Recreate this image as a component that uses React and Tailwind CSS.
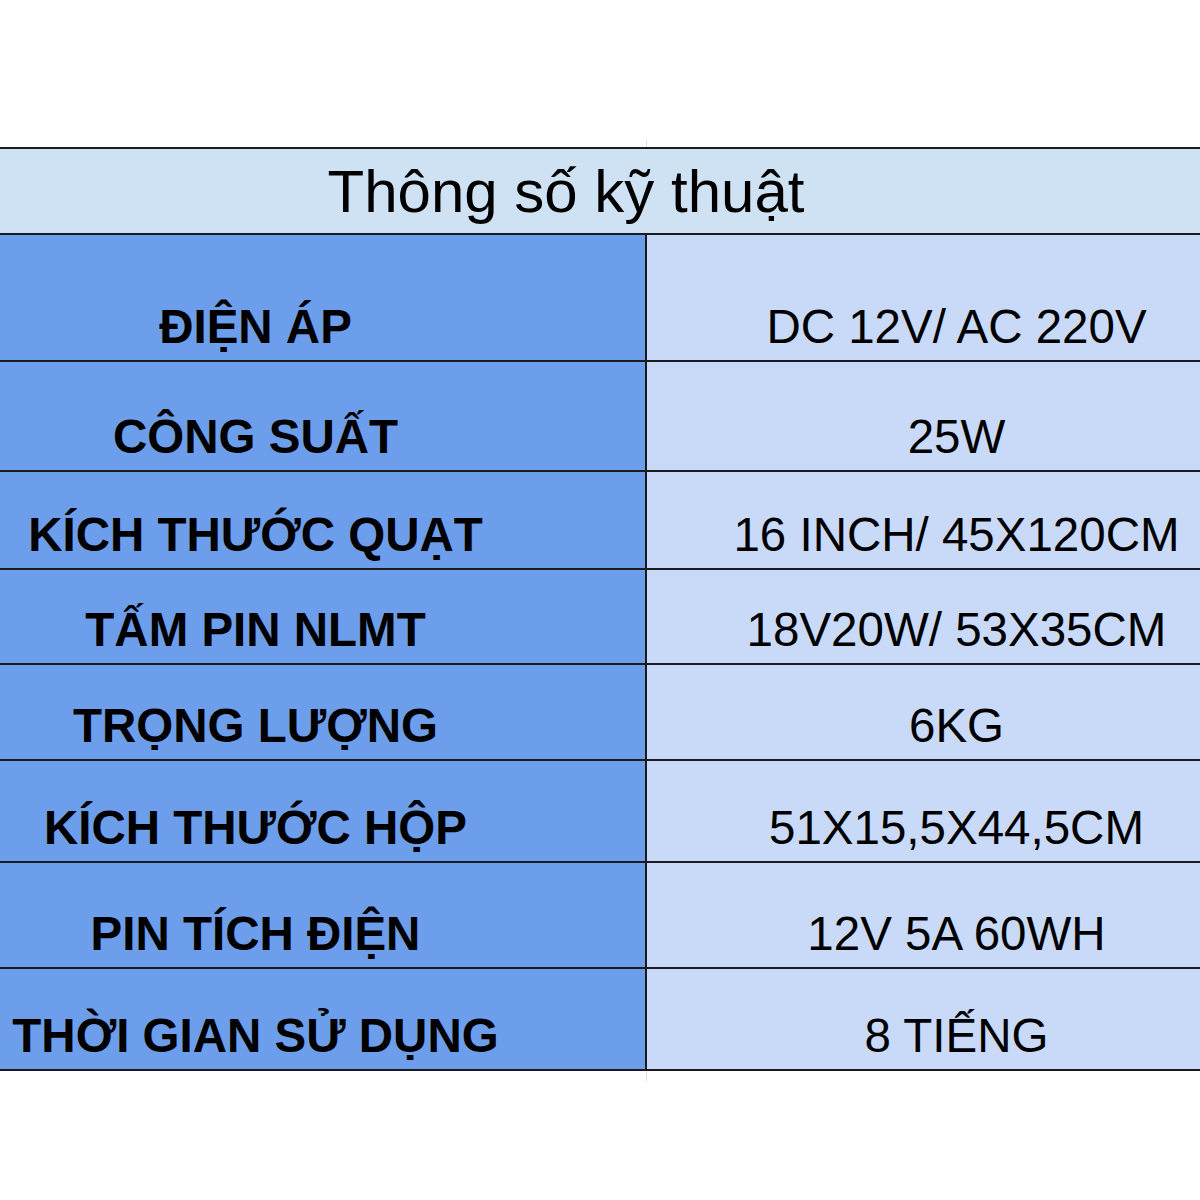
export default function App() {
  const rows = [
    ["ĐIỆN ÁP", "DC 12V/ AC 220V", "h-[127px]"],
    ["CÔNG SUẤT", "25W", "h-[110px]"],
    ["KÍCH THƯỚC QUẠT", "16 INCH/ 45X120CM", "h-[98px]"],
    ["TẤM PIN NLMT", "18V20W/ 53X35CM", "h-[95px]"],
    ["TRỌNG LƯỢNG", "6KG", "h-[96px]"],
    ["KÍCH THƯỚC HỘP", "51X15,5X44,5CM", "h-[102px]"],
    ["PIN TÍCH ĐIỆN", "12V 5A 60WH", "h-[106px]"],
    ["THỜI GIAN SỬ DỤNG", "8 TIẾNG", "h-[102px]"],
  ];
  return (
    <div
      className="w-[1200px] h-[1200px] bg-white overflow-hidden text-black"
      style={{ fontFamily: '"Liberation Sans", Arial, sans-serif' }}
    >
      <div className="h-[147px] flex items-end">
        <div className="ml-[646px] w-px h-[8px] bg-[#e2e2e2]" />
      </div>
      <div className="ml-[-134px] w-[1400px] border-t-2 border-[#1a1a20]">
        <div className="h-[86px] flex items-end justify-center bg-[#cfe2f3] border-b-2 border-[#1a1a20] pb-[11px]">
          <span className="text-[60px] leading-none">Thông số kỹ thuật</span>
        </div>
        {rows.map(([k, v, h]) => (
          <div key={k} className={`flex ${h} border-b-2 border-[#1a1a20]`}>
            <div className="w-[781px] flex items-end justify-center bg-[#6d9eeb] border-r-2 border-[#1a1a20] pb-[10px]">
              <span className="text-[47.5px] leading-none font-bold">{k}</span>
            </div>
            <div className="flex-1 flex items-end justify-center bg-[#c9daf8] pb-[10px]">
              <span className="text-[47.5px] leading-none">{v}</span>
            </div>
          </div>
        ))}
      </div>
      <div className="ml-[646px] w-px h-[10px] bg-[#e2e2e2]" />
    </div>
  );
}
